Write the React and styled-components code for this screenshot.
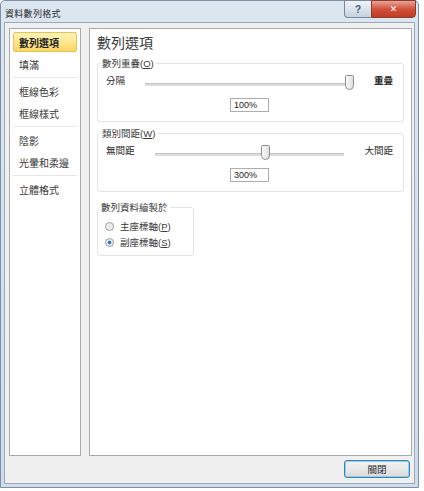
import React from 'react'
import styled, { createGlobalStyle } from 'styled-components'

const GlobalStyle = createGlobalStyle`
  html, body {
    margin: 0;
    padding: 0;
    background: #ffffff;
  }
  body {
    font-family: "Liberation Sans", "Noto Sans CJK TC", sans-serif;
    font-size: 10px;
    color: #1e1e1e;
  }
`

const menuGroups = [
  ['數列選項', '填滿'],
  ['框線色彩', '框線樣式'],
  ['陰影', '光暈和柔邊'],
  ['立體格式'],
]

const THUMB_WIDTH = 9

function Slider({ value }) {
  return (
    <Track>
      <Thumb style={{ left: `calc(${value}% - ${(value * THUMB_WIDTH) / 100}px)` }} />
    </Track>
  )
}

function App() {
  const [selected, setSelected] = React.useState('數列選項')
  const [axis, setAxis] = React.useState('secondary')

  return (
    <>
      <GlobalStyle />
      <Window>
        <TitleBar>
          <Title>資料數列格式</Title>
          <Controls>
            <HelpButton>?</HelpButton>
            <CloseButton>✕</CloseButton>
          </Controls>
        </TitleBar>
        <Body>
          <Main>
            <Sidebar>
              {menuGroups.map((group, gi) => (
                <MenuGroup key={gi} last={gi === menuGroups.length - 1}>
                  {group.map((item) => (
                    <MenuItem
                      key={item}
                      active={item === selected}
                      onClick={() => setSelected(item)}
                    >
                      {item}
                    </MenuItem>
                  ))}
                </MenuGroup>
              ))}
            </Sidebar>
            <Content>
              <Heading>數列選項</Heading>
              <Group>
                <Legend>數列重疊(<u>O</u>)</Legend>
                <SliderRow>
                  <SideLabel>分隔</SideLabel>
                  <Slider value={100} />
                  <SideLabel strong>重疊</SideLabel>
                </SliderRow>
                <ValueRow>
                  <ValueBox>100%</ValueBox>
                </ValueRow>
              </Group>
              <Group>
                <Legend>類別間距(<u>W</u>)</Legend>
                <SliderRow>
                  <SideLabel>無間距</SideLabel>
                  <Slider value={59} />
                  <SideLabel>大間距</SideLabel>
                </SliderRow>
                <ValueRow>
                  <ValueBox>300%</ValueBox>
                </ValueRow>
              </Group>
              <RadioGroup>
                <Legend>數列資料繪製於</Legend>
                <RadioRow onClick={() => setAxis('primary')}>
                  <Radio checked={axis === 'primary'} />
                  <span>主座標軸(<u>P</u>)</span>
                </RadioRow>
                <RadioRow onClick={() => setAxis('secondary')}>
                  <Radio checked={axis === 'secondary'} />
                  <span>副座標軸(<u>S</u>)</span>
                </RadioRow>
              </RadioGroup>
            </Content>
          </Main>
          <Footer>
            <Button>關閉</Button>
          </Footer>
        </Body>
      </Window>
    </>
  )
}

const Window = styled.div`
  width: 419px;
  height: 488px;
  box-sizing: border-box;
  display: flex;
  flex-direction: column;
  background: linear-gradient(180deg, #dbe6f1 0%, #cfdceb 100%);
  border: 1px solid #7d8fa3;
  border-radius: 5px 5px 0 0;
  padding: 0 3px 3px 3px;
`

const TitleBar = styled.div`
  height: 21px;
  display: flex;
  align-items: flex-start;
  justify-content: space-between;
`

const Title = styled.div`
  font-size: 9px;
  color: #2a2a2a;
  padding: 6px 0 0 1px;
  letter-spacing: 0.3px;
`

const Controls = styled.div`
  display: flex;
  margin-right: -1px;
  margin-top: -1px;
`

const HelpButton = styled.div`
  width: 26px;
  height: 16px;
  display: flex;
  align-items: center;
  justify-content: center;
  font-size: 10px;
  font-weight: bold;
  color: #4c5a6a;
  background: linear-gradient(180deg, #eef3f8 0%, #c6d3e1 100%);
  border: 1px solid #7b8797;
  border-right: none;
  border-radius: 0 0 0 4px;
`

const CloseButton = styled.div`
  width: 43px;
  height: 16px;
  display: flex;
  align-items: center;
  justify-content: center;
  font-family: "DejaVu Sans", sans-serif;
  font-size: 9px;
  font-weight: bold;
  color: #ffffff;
  background: linear-gradient(180deg, #e8a597 0%, #d0523c 50%, #c23a24 100%);
  border: 1px solid #8a3b30;
  border-radius: 0 0 4px 0;
`

const Body = styled.div`
  flex: 1;
  display: flex;
  flex-direction: column;
  background: #f0f0f0;
  border: 1px solid #9aa8b8;
  padding: 5px 2px 5px 4px;
`

const Main = styled.div`
  flex: 1;
  display: flex;
  gap: 8px;
`

const Sidebar = styled.div`
  width: 72px;
  box-sizing: border-box;
  background: #ffffff;
  border: 1px solid #a9a9a9;
  padding: 2px 1px;
`

const MenuGroup = styled.div`
  display: flex;
  flex-direction: column;
  padding-bottom: 2px;
  margin: 0 2px 2px;
  border-bottom: 1px solid ${(p) => (p.last ? 'transparent' : '#e6e6e6')};
`

const MenuItem = styled.div`
  height: 20px;
  box-sizing: border-box;
  display: flex;
  align-items: center;
  padding-left: 5px;
  margin: 1px 0;
  font-size: 10px;
  color: ${(p) => (p.active ? '#1e1e1e' : '#3a3a3a')};
  font-weight: ${(p) => (p.active ? 'bold' : 'normal')};
  background: ${(p) =>
    p.active ? 'linear-gradient(180deg, #fff3b8 0%, #fde487 60%, #f9d660 100%)' : 'transparent'};
  border: 1px solid ${(p) => (p.active ? '#e8c15a' : 'transparent')};
  border-radius: 2px;
  cursor: default;
`

const Content = styled.div`
  flex: 1;
  box-sizing: border-box;
  background: #ffffff;
  border: 1px solid #a9a9a9;
  padding: 5px 7px 0 7px;
`

const Heading = styled.div`
  font-size: 14px;
  color: #3a3a3a;
  line-height: 18px;
  margin-bottom: 4px;
`

const Group = styled.fieldset`
  margin: 0 0 4px;
  padding: 2px 10px 9px 8px;
  border: 1px solid #e4e4e4;
  border-radius: 3px;
`

const RadioGroup = styled(Group)`
  width: 97px;
  box-sizing: border-box;
  margin-top: 8px;
  padding: 4px 6px 5px 7px;
`

const Legend = styled.legend`
  font-size: 9.5px;
  color: #3a3a3a;
  padding: 0 2px;
  margin-left: -6px;
`

const SliderRow = styled.div`
  display: flex;
  align-items: center;
  gap: 20px;
  height: 16px;
`

const SideLabel = styled.div`
  font-size: 9.5px;
  color: #2a2a2a;
  font-weight: ${(p) => (p.strong ? 'bold' : 'normal')};
`

const Track = styled.div`
  position: relative;
  flex: 1;
  height: 2px;
  margin-top: 8px;
  background: #dcdcdc;
  border-top: 1px solid #c4c4c4;
`

const Thumb = styled.div`
  position: absolute;
  top: -9px;
  width: ${THUMB_WIDTH}px;
  height: 15px;
  box-sizing: border-box;
  background: linear-gradient(90deg, #fafafa 0%, #e0e0e0 100%);
  border: 1px solid #8d8d8d;
  border-radius: 2px 2px 5px 5px;
`

const ValueRow = styled.div`
  display: flex;
  justify-content: center;
  padding-top: 10px;
`

const ValueBox = styled.div`
  width: 39px;
  height: 14px;
  box-sizing: border-box;
  border: 1px solid #acacac;
  font-size: 9px;
  line-height: 12px;
  padding-left: 3px;
  color: #1e1e1e;
`

const RadioRow = styled.label`
  display: flex;
  align-items: center;
  gap: 6px;
  height: 16px;
  font-size: 9.5px;
  color: #3a3a3a;
`

const Radio = styled.span`
  width: 9px;
  height: 9px;
  border-radius: 50%;
  box-sizing: border-box;
  border: 1px solid #9a9a9a;
  background: ${(p) =>
    p.checked
      ? 'radial-gradient(circle, #2a6fb5 0%, #3b86cc 35%, #e9eef3 45%, #f2f2f2 100%)'
      : 'radial-gradient(circle, #e6e6e6 0%, #f6f6f6 100%)'};
`

const Footer = styled.div`
  display: flex;
  justify-content: flex-end;
  padding: 4px 2px 0 0;
`

const Button = styled.button`
  width: 66px;
  height: 18px;
  font-family: inherit;
  font-size: 9.5px;
  color: #2a2a2a;
  background: linear-gradient(180deg, #f2f2f2 0%, #e8e8e8 50%, #d8d8d8 100%);
  border: 1px solid #3c7fb1;
  box-shadow: inset 0 0 0 1px #8fd0ef;
  border-radius: 3px;
  padding: 0;
`

export default App
